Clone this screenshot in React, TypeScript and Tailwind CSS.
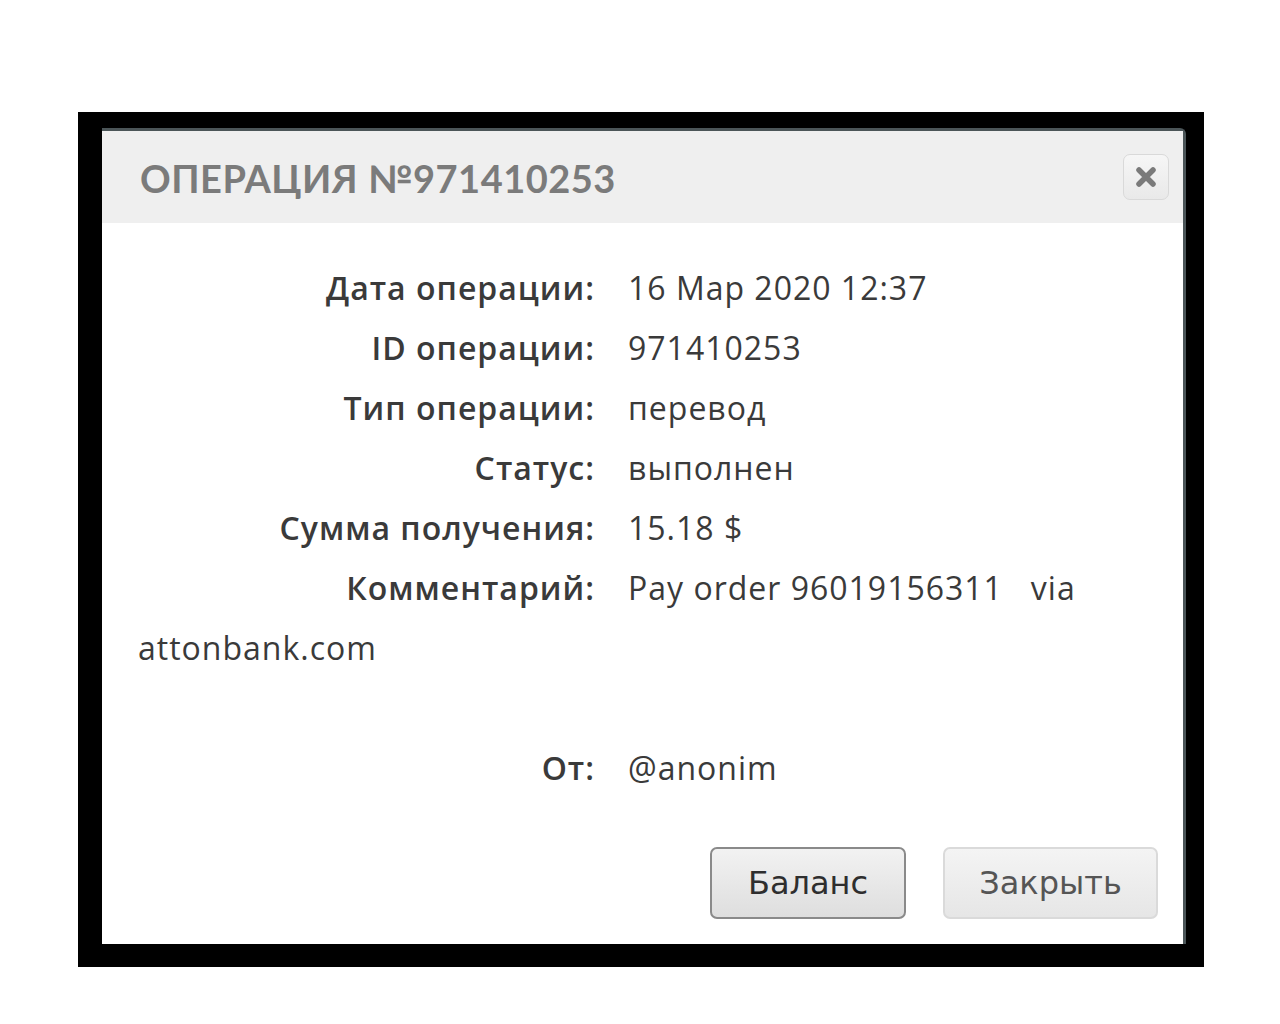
import React from "react";

const rows: [string, string][] = [
  ["Дата операции:", "16 Мар 2020 12:37"],
  ["ID операции:", "971410253"],
  ["Тип операции:", "перевод"],
  ["Статус:", "выполнен"],
  ["Сумма получения:", "15.18 $"],
];

export default function App() {
  return (
    <div className="min-h-[1024px] w-[1280px] bg-white pt-[112px] pl-[78px]">
      <div className="w-[1126px] h-[855px] bg-black pt-[16px] pl-[24px]">
        <div className="w-[1084px] h-[816px] bg-white border-t-[3px] border-r-[3px] border-[#4b5558] rounded-tr-[6px] flex flex-col">
          <div className="h-[92px] bg-[#efefef] flex items-center justify-between pl-[38px] pr-[14px]">
            <div
              className="text-[38px] font-bold tracking-[0.5px] text-[#7b7b7b] pt-[3px]"
              style={{ fontFamily: "Lato, 'Open Sans', sans-serif" }}
            >
              ОПЕРАЦИЯ №971410253
            </div>
            <div className="w-[46px] h-[46px] rounded-[7px] border border-[#d9d9d9] bg-gradient-to-b from-[#f6f6f6] to-[#e9e9e9] flex items-center justify-center">
              <svg width="24" height="24" viewBox="0 0 24 24">
                <path d="M5 5 L19 19 M19 5 L5 19" stroke="#7a7a7a" strokeWidth="5.5" strokeLinecap="round" />
              </svg>
            </div>
          </div>
          <div
            className="pt-[35px] pl-[36px] text-[32px] tracking-[1px] leading-[60px] text-[#3a3a3a]"
            style={{ fontFamily: "'Open Sans', Lato, sans-serif" }}
          >
            {rows.map(([l, v]) => (
              <div key={l}>
                <span className="inline-block w-[457px] text-right font-semibold">{l}</span>
                <span className="ml-[33px]">{v}</span>
              </div>
            ))}
            <div>
              <span className="inline-block w-[457px] text-right font-semibold">Комментарий:</span>
              <span className="ml-[33px] whitespace-pre">Pay order 96019156311   via</span>
              <br />
              <span>attonbank.com</span>
            </div>
            <div className="h-[60px]" />
            <div>
              <span className="inline-block w-[457px] text-right font-semibold">От:</span>
              <span className="ml-[33px]">@anonim</span>
            </div>
          </div>
          <div
            className="mt-[49px] flex justify-end gap-[37px] pr-[25px]"
            style={{ fontFamily: "'DejaVu Sans', Verdana, sans-serif" }}
          >
            <button className="w-[196px] h-[72px] rounded-[7px] border-2 border-[#8a8a8a] bg-gradient-to-b from-[#f2f2f2] to-[#dedede] text-[32px] text-[#2e2e2e]">
              Баланс
            </button>
            <button className="w-[215px] h-[72px] rounded-[7px] border-2 border-[#dadada] bg-gradient-to-b from-[#f4f4f4] to-[#e6e6e6] text-[32px] text-[#555555]">
              Закрыть
            </button>
          </div>
        </div>
      </div>
    </div>
  );
}
